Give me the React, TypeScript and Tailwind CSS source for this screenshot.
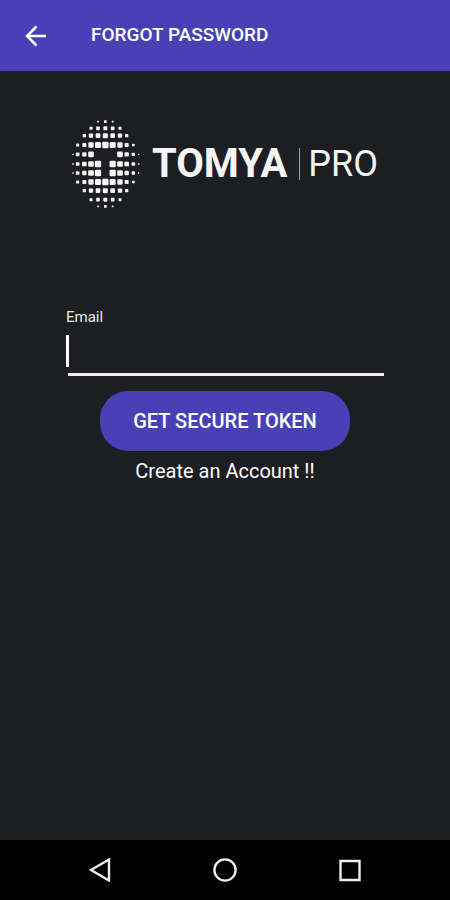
import React from "react";

// Each row of the emblem: its centre line, then [x, size] of every dot.
const DOTS: [number, [number, number][]][] = [
  [35, [[114, 5], [136, 8], [158, 5]]],
  [55, [[93, 9], [114, 11], [136, 12], [158, 11], [180, 9]]],
  [77, [[73, 10], [93, 13], [114, 14], [136, 15], [158, 14], [180, 13], [200, 10]]],
  [105, [[53, 9], [73, 12], [93, 16], [114, 18], [136, 19], [158, 18], [180, 16], [200, 12], [220, 8]]],
  [133, [[39, 4], [53, 11], [73, 13], [93, 17], [180, 17], [200, 13], [220, 10], [236, 4]]],
  [162, [[39, 5], [53, 11], [73, 14], [93, 17], [114, 19], [158, 19], [180, 17], [200, 14], [220, 11], [236, 5]]],
  [189, [[39, 4], [53, 11], [73, 13], [93, 17], [114, 19], [158, 19], [180, 17], [200, 13], [220, 10], [236, 4]]],
  [216, [[53, 9], [73, 12], [93, 16], [114, 18], [136, 19], [158, 18], [180, 16], [200, 12], [220, 8]]],
  [242, [[73, 10], [93, 13], [114, 14], [136, 15], [158, 14], [180, 13], [200, 10]]],
  [269, [[93, 9], [114, 11], [136, 12], [158, 11], [180, 9]]],
  [289, [[114, 5], [136, 8], [158, 5]]],
];

function Emblem() {
  return (
    <svg className="h-22 w-17 shrink-0" viewBox="36 30 204 264" fill="#f4f4f4" aria-hidden="true">
      {DOTS.map(([y, row]) =>
        row.map(([x, s]) => (
          <rect key={`${x}-${y}`} x={x - s / 2} y={y - s / 2} width={s} height={s} rx={s / 5} />
        )),
      )}
    </svg>
  );
}

export default function App() {
  return (
    <div className="flex min-h-screen flex-col bg-[#1d1e22] font-['Roboto',sans-serif] text-white">
      <header className="flex h-[71px] items-center bg-[#4741b5] px-6">
        <button type="button" aria-label="Back" className="flex w-6 justify-center">
          <svg className="size-6" viewBox="0 0 24 24" fill="none" stroke="currentColor" strokeWidth="2.6">
            <path d="M22 12H3.500M12.500 2.500L3 12l9.500 9.500" />
          </svg>
        </button>
        <h1 className="ml-[43px] text-[19px] font-medium">FORGOT PASSWORD</h1>
      </header>

      <main className="flex flex-1 flex-col items-center pt-[49px]">
        <div className="flex h-22 items-center justify-center">
          <Emblem />
          <div className="ml-3 flex items-center text-[40px] leading-none text-[#f4f4f4]">
            <span className="font-bold">TOMYA</span>
            <span className="ml-3 mr-2 h-8 w-px bg-[#a0a0a2]" />
            <span className="text-[36px]">PRO</span>
          </div>
        </div>

        <form className="flex w-full flex-col items-center px-[66px] pt-[101px]">
          <div className="w-full">
            <label htmlFor="email" className="block text-[15px] leading-4 text-[#e8e8e8]">Email</label>
            <div className="mt-2 flex h-9 items-center">
              <span className="h-8 w-[3px] bg-white" />
              <input id="email" type="email" className="h-9 min-w-0 flex-1 bg-transparent text-xl outline-none" />
            </div>
            <div className="ml-0.5 mt-1 h-[3px] bg-[#f0f0f0]" />
          </div>
          <button type="button" className="mt-[15px] h-[60px] w-[250px] rounded-[28px] bg-[#4741b5] text-xl font-medium">
            GET SECURE TOKEN
          </button>
          <a href="#create" className="mt-1.5 text-xl leading-7">Create an Account !!</a>
        </form>
      </main>

      <nav className="flex h-[60px] items-center justify-center gap-[101px] bg-black text-[#ededed]">
        <button type="button" aria-label="Back">
          <svg className="size-6" viewBox="0 0 24 24" fill="none" stroke="currentColor" strokeWidth="2.400">
            <path d="M21 1.500v21L3 12z" />
          </svg>
        </button>
        <button type="button" aria-label="Home">
          <svg className="size-6" viewBox="0 0 24 24" fill="none" stroke="currentColor" strokeWidth="2.400">
            <circle cx="12" cy="12" r="10.600" />
          </svg>
        </button>
        <button type="button" aria-label="Recent apps">
          <svg className="size-6" viewBox="0 0 24 24" fill="none" stroke="currentColor" strokeWidth="2.400">
            <path d="M2.500 3h19v19h-19z" />
          </svg>
        </button>
      </nav>
    </div>
  );
}
